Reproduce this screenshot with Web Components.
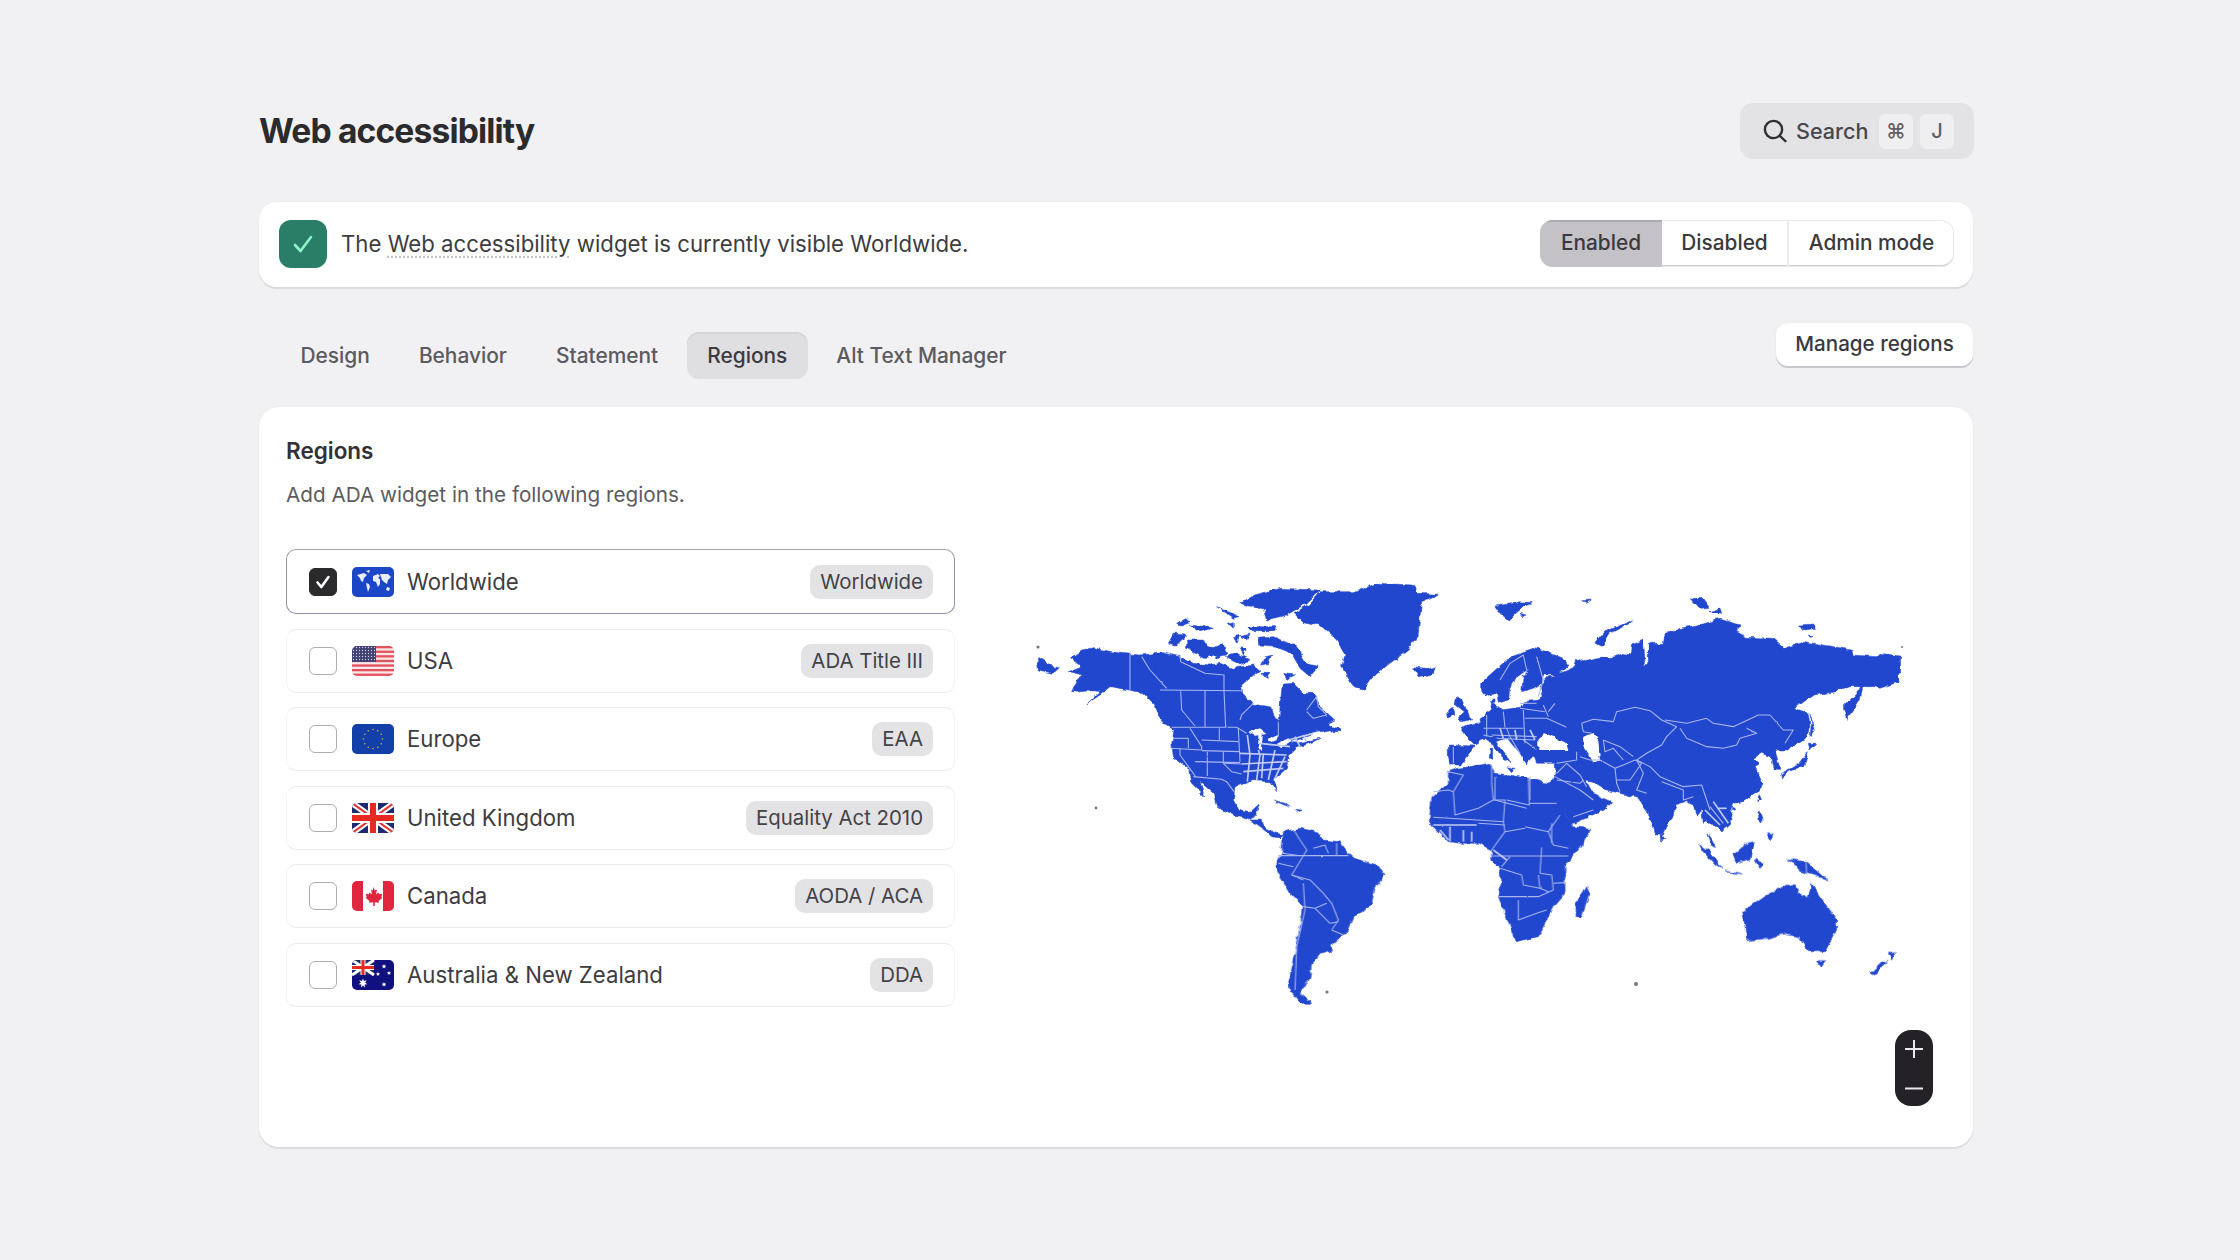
<!DOCTYPE html>
<html lang="en">
<head>
<meta charset="utf-8">
<title>Web accessibility</title>
<style>
  html, body { margin: 0; background: #f1f0f3; }
  body { font-family: Inter, "Liberation Sans", sans-serif; color: #303030; }
</style>
</head>
<body>
<ada-page>
  <page-header slot="header" heading="Web accessibility"></page-header>
  <status-banner slot="banner">The <u>Web accessibility</u> widget is currently visible Worldwide.</status-banner>
  <tab-bar slot="tabs"></tab-bar>
  <regions-card slot="card">
    <region-row slot="list" flag="world" checked>Worldwide<span slot="badge">Worldwide</span></region-row>
    <region-row slot="list" flag="usa">USA<span slot="badge">ADA Title III</span></region-row>
    <region-row slot="list" flag="eu">Europe<span slot="badge">EAA</span></region-row>
    <region-row slot="list" flag="uk">United Kingdom<span slot="badge">Equality Act 2010</span></region-row>
    <region-row slot="list" flag="ca">Canada<span slot="badge">AODA / ACA</span></region-row>
    <region-row slot="list" flag="au">Australia &amp; New Zealand<span slot="badge">DDA</span></region-row>
    <world-map slot="map"></world-map>
    <zoom-control slot="zoom"></zoom-control>
  </regions-card>
</ada-page>

<script>
class AdaPage extends HTMLElement {
  constructor() {
    super();
    this.attachShadow({ mode: "open" });
  }

  connectedCallback() {
    this.shadowRoot.innerHTML = /* html */`
      <style>
        :host {
          display: flex;
          flex-direction: column;
          width: 1714px;
          height: 1260px;
          box-sizing: border-box;
          margin-left: 259px;
          padding-top: 103px;
        }
        .banner { display: block; margin-top: 43px; }
        .tabs { display: block; margin-top: 36px; }
        .card { display: block; margin-top: 28px; }
      </style>
      <slot name="header"></slot>
      <div class="banner"><slot name="banner"></slot></div>
      <div class="tabs"><slot name="tabs"></slot></div>
      <div class="card"><slot name="card"></slot></div>
    `;
  }
}

class PageHeader extends HTMLElement {
  constructor() {
    super();
    this.attachShadow({ mode: "open" });
  }

  connectedCallback() {
    this.shadowRoot.innerHTML = /* html */`
      <style>
        :host { display: flex; align-items: center; justify-content: space-between; height: 56px; }
        h1 { margin: 0; font: 700 33.6px/56px Inter, sans-serif; letter-spacing: -0.85px; color: #2b2a2d; }
        .search {
          display: flex; align-items: center; box-sizing: border-box;
          width: 234px; height: 56px; margin-right: -1px; padding-left: 23px;
          background: #e3e2e5; border-radius: 13px; color: #48474b;
          font: 500 21.6px/30px Inter, sans-serif;
        }
        svg { width: 24px; height: 24px; margin-right: 9px; flex: none; }
        .label { width: 83px; }
        kbd {
          display: flex; align-items: center; justify-content: center;
          width: 34px; height: 35px; margin-right: 7px; border-radius: 6px;
          background: #efeef1; color: #605f63; font: 500 20px/35px Inter, "DejaVu Sans", sans-serif;
        }
      </style>
      <h1>${this.getAttribute("heading")}</h1>
      <div class="search">
        <svg viewBox="0 0 24 24" fill="none" stroke="#303033" stroke-width="2.4" stroke-linecap="round"><circle cx="10.5" cy="10.5" r="8.6"/><path d="M17 17l5.4 5.2"/></svg>
        <span class="label">Search</span>
        <kbd>⌘</kbd><kbd>J</kbd>
      </div>
    `;
  }
}

class StatusBanner extends HTMLElement {
  constructor() {
    super();
    this.attachShadow({ mode: "open" });
  }

  connectedCallback() {
    this.shadowRoot.innerHTML = /* html */`
      <style>
        :host {
          display: flex; align-items: center; height: 85px; box-sizing: border-box;
          padding: 0 19px 2px 20px; background: #fff; border-radius: 18px;
          box-shadow: 0 2px 1px #dcdbde, 0 0 2px #e6e5e8;
        }
        .icon {
          display: flex; align-items: center; justify-content: center; flex: none;
          width: 48px; height: 48px; border-radius: 12px; background: #2a7d67;
        }
        .text { margin-left: 14px; flex: 1; font: 400 22.2px/30px Inter, sans-serif; color: #3d3c40; }
        ::slotted(u) { text-decoration: underline dotted #c3c2c6; text-underline-offset: 5px; }
        .group {
          display: flex; height: 47px; box-sizing: border-box; border-radius: 13px; overflow: hidden;
          box-shadow: inset 0 0 0 1px #e9e8eb, inset 0 -2px 0 #cfced2;
          font: 500 20.8px/46px Inter, sans-serif; color: #3a393d;
        }
        .group span { display: block; text-align: center; box-sizing: border-box; }
        .on { width: 122px; background: #c4c2c6; box-shadow: inset 0 2px 0 #acaab0; }
        .off { width: 127px; border-right: 2px solid #ebeaed; }
        .admin { width: 165px; }
      </style>
      <div class="icon">
        <svg width="26" height="26" viewBox="0 0 26 26" fill="none" stroke="#8df3c8" stroke-width="2.6" stroke-linecap="round" stroke-linejoin="round"><path d="M5 14l5.5 6L21 6"/></svg>
      </div>
      <div class="text"><slot></slot></div>
      <div class="group">
        <span class="on">Enabled</span><span class="off">Disabled</span><span class="admin">Admin mode</span>
      </div>
    `;
  }
}

class TabBar extends HTMLElement {
  constructor() {
    super();
    this.attachShadow({ mode: "open" });
  }

  connectedCallback() {
    const tabs = ["Design", "Behavior", "Statement", "Regions", "Alt Text Manager"];
    this.shadowRoot.innerHTML = /* html */`
      <style>
        :host { display: flex; justify-content: space-between; align-items: flex-start; height: 56px; }
        .tabs { display: flex; gap: 8px; padding: 9px 0 0 21px; }
        .tab {
          height: 47px; padding: 0 20.500px; border-radius: 12px;
          font: 500 20.9px/47px Inter, sans-serif; color: #5b5a5e;
        }
        .tab.active { background: #dfdee1; color: #3c3b3f; box-shadow: inset 0 2px 0 #d6d5d8; }
        button {
          width: 197px; height: 43px; padding: 0 0 2px; border: 0; border-radius: 12px; background: #fff;
          box-shadow: 0 2px 0 #c8c7cb, 0 0 2px #e4e3e6;
          font: 500 20.6px/40px Inter, sans-serif; color: #3a393d;
        }
      </style>
      <div class="tabs">
        ${tabs.map(t => `<div class="tab${t === "Regions" ? " active" : ""}">${t}</div>`).join("")}
      </div>
      <button>Manage regions</button>
    `;
  }
}

class RegionsCard extends HTMLElement {
  constructor() {
    super();
    this.attachShadow({ mode: "open" });
  }

  connectedCallback() {
    this.shadowRoot.innerHTML = /* html */`
      <style>
        :host {
          display: block; position: relative; height: 740px; box-sizing: border-box;
          padding: 29px 0 0 27px; background: #fff; border-radius: 20px;
          box-shadow: 0 2px 1px #dddce0, 0 0 2px #e6e5e8;
        }
        h2 { margin: 0; font: 600 22.5px/30px Inter, sans-serif; color: #323135; }
        p { margin: 14px 0 0; font: 400 20.7px/30px Inter, sans-serif; color: #5c5b5f; }
        .columns { display: flex; margin-top: 39px; }
        .list { display: flex; flex-direction: column; gap: 14.5px; width: 669px; flex: none; }
        .map { display: block; margin: 21px 0 0 65px; }
        .zoom { position: absolute; right: 40px; bottom: 41px; }
      </style>
      <h2>Regions</h2>
      <p>Add ADA widget in the following regions.</p>
      <div class="columns">
        <div class="list"><slot name="list"></slot></div>
        <div class="map"><slot name="map"></slot></div>
      </div>
      <div class="zoom"><slot name="zoom"></slot></div>
    `;
  }
}

const FLAGS = {
  world: `<rect width="42" height="30" fill="#1b46c8"/>
    <path fill="#e8edff" d="M5 8l7-2 3 2-3 3-1 4-2-1-1-3zM14 4l4-1-1 3zM14 16l3 1 1 3-2 5-1-4zM21 9l5-2 2 2-2 2 2 1v5l-2 3-2-5-3-1zM28 7l8 0 3 3-3 3-1 4-3-2-2-2zM35 20l3 1-1 3-3-1z"/>`,
  usa: `<defs><pattern id="dots" width="3" height="3" patternUnits="userSpaceOnUse"><rect width="3" height="3" fill="#3f4070"/><circle cx="1.5" cy="1.5" r=".7" fill="#c9cbe0"/></pattern></defs>
    <rect width="42" height="30" fill="#fbe9ea"/>
    ${[0, 4.6, 9.2, 13.8, 18.4, 23, 27.6].map(y => `<rect y="${y}" width="42" height="2.3" fill="#e2525c"/>`).join("")}
    <rect width="24" height="16" fill="url(#dots)"/>`,
  eu: `<rect width="42" height="30" fill="#1240a8"/>
    ${[...Array(12).keys()].map(i => `<circle cx="${21 + 9.5 * Math.cos(i * Math.PI / 6)}" cy="${15 + 9.5 * Math.sin(i * Math.PI / 6)}" r=".8" fill="#c9b24a"/>`).join("")}`,
  uk: `<rect width="42" height="30" fill="#1c2a6e"/>
    <path d="M0 0L42 30M42 0L0 30" stroke="#fff" stroke-width="6"/>
    <path d="M0 0L42 30M42 0L0 30" stroke="#e2332f" stroke-width="2"/>
    <path d="M21 0V30M0 15H42" stroke="#fff" stroke-width="10"/>
    <path d="M21 0V30M0 15H42" stroke="#e8291f" stroke-width="6"/>`,
  ca: `<rect width="42" height="30" fill="#fff"/><rect width="11" height="30" fill="#e0263f"/><rect x="31" width="11" height="30" fill="#e0263f"/>
    <path fill="#e0263f" d="M21 6l2 3.5 2-1-1 5 2.500-2 .8 1.800 3-.5-1 3.200 1.200.8-4 3.300.5 1.700-4.200-.6V25h-1.600v-3.800l-4.200.6.5-1.700-4-3.300 1.200-.8-1-3.200 3 .5.8-1.800 2.500 2-1-5 2 1z"/>`,
  au: `<rect width="42" height="30" fill="#10107e"/>
    <g><rect width="22" height="15" fill="#1c2a6e"/>
    <path d="M0 0L22 15M22 0L0 15" stroke="#fff" stroke-width="3"/>
    <path d="M11 0V15M0 7.500H22" stroke="#fff" stroke-width="5"/>
    <path d="M11 0V15M0 7.500H22" stroke="#e8291f" stroke-width="3"/></g>
    <path fill="#fff" d="M11 18.500l1 2.600 2.700-.8-1.500 2.400 2.300 1.600-2.800.3.2 2.800-1.900-2-1.900 2 .2-2.800-2.800-.3 2.300-1.600-1.500-2.400 2.700.8zM32 4l.7 1.600 1.600.2-1.200 1.100.4 1.600-1.500-.9-1.500.9.4-1.600-1.200-1.100 1.600-.2zM26 12l.6 1.300 1.400.1-1 1 .3 1.400-1.300-.7-1.300.7.3-1.400-1-1 1.400-.1zM37 11l.6 1.300 1.400.1-1 1 .3 1.400-1.300-.7-1.300.7.3-1.400-1-1 1.400-.1zM32 22l.7 1.600 1.600.2-1.200 1.100.4 1.600-1.500-.9-1.500.9.4-1.600-1.200-1.100 1.600-.2z"/>`
};

class RegionRow extends HTMLElement {
  constructor() {
    super();
    this.attachShadow({ mode: "open" });
  }

  connectedCallback() {
    const checked = this.hasAttribute("checked");
    const clip = "clip-" + this.getAttribute("flag");
    this.shadowRoot.innerHTML = /* html */`
      <style>
        :host {
          display: flex; align-items: center; height: 64px; box-sizing: border-box;
          padding: 0 21px 0 22px; border-radius: 10px; border: 1px solid #f5f5f6;
          border-top-color: #ebebed; border-bottom-color: #ebebed;
          font: 400 22.2px/30px Inter, sans-serif; color: #3d3c40;
        }
        :host([checked]) { border: 1.5px solid #8f91a8; border-top-color: #a9a8ad; height: 65px; }
        .check {
          display: flex; align-items: center; justify-content: center; flex: none;
          width: 28px; height: 28px; box-sizing: border-box; border-radius: 6px;
          border: 1.5px solid #aeadb1; background: #fff;
        }
        :host([checked]) .check { background: #2a292c; border-color: #2a292c; }
        svg.flag { width: 42px; height: 30px; margin: 0 13px 0 15px; flex: none; }
        .label { flex: 1; }
        .badge {
          height: 34px; padding: 0 10px; border-radius: 10px; background: #e3e3e5;
          font: 400 20.4px/34px Inter, sans-serif; color: #434246;
        }
      </style>
      <span class="check">${checked ? `<svg width="20" height="20" viewBox="0 0 20 20" fill="none" stroke="#fff" stroke-width="2.6" stroke-linecap="round" stroke-linejoin="round"><path d="M4.5 10.5l3.8 4.5L15.5 5"/></svg>` : ""}</span>
      <svg class="flag" viewBox="0 0 42 30">
        <defs><clipPath id="${clip}"><rect width="42" height="30" rx="5"/></clipPath></defs>
        <g clip-path="url(#${clip})">${FLAGS[this.getAttribute("flag")]}</g>
      </svg>
      <span class="label"><slot></slot></span>
      <span class="badge"><slot name="badge"></slot></span>
    `;
  }
}

// all coordinates are taken at 3x, each block relative to its origin on the page
const MAP_BLOCKS = [
  {
    origin: [1020, 560],
    land: [
      "150,295 185,270 220,263 250,270 300,280 360,285 430,278 480,290 520,310 570,315 600,310 640,325 700,315 720,330 690,355 665,375 668,400 700,432 750,440 765,470 778,482 780,440 787,372 820,370 850,400 880,400 900,440 945,480 925,490 955,510 925,510 880,520 850,535 810,545 830,550 900,535 880,545 830,565 805,590 800,625 760,660 770,695 750,665 700,662 645,680 640,720 660,755 690,758 718,733 705,760 690,775 640,765 590,740 580,700 540,665 555,710 515,670 510,630 460,590 455,550 462,510 430,490 400,430 370,400 330,390 270,380 240,405 200,432 240,395 200,390 155,395 170,360 190,345 145,335 185,320",
      "900,95 1010,95 1070,70 1180,75 1190,100 1255,103 1205,125 1195,220 1165,270 1110,310 1060,350 1030,388 1000,380 965,320 975,285 950,240 900,195 850,185 825,160 870,130",
      "1178,323 1220,328 1245,320 1240,342 1195,350",
      "700,105 780,85 900,90 860,130 800,165 740,180 730,150 660,130 690,115",
      "715,235 760,230 830,260 860,310 895,320 870,350 840,325 815,280 770,262 720,258",
      "500,240 540,240 590,270 600,295 550,295 500,265",
      "445,250 460,222 500,225 470,255",
      "470,190 500,175 510,185 480,195", "510,195 560,200 580,205 540,215", "640,230 660,225 650,250",
      "660,230 690,222 680,240", "660,260 680,265 670,285", "680,200 770,200 760,212 690,212",
      "590,140 660,170 640,175", "625,190 640,185 640,205", "735,290 755,285 745,310 725,315",
      "720,340 750,340 740,355", "925,505 955,503 962,515 940,515", "52,292 100,320 118,323 100,340 55,330",
      "620,290 650,280 690,300 660,315", "575,265 610,250 620,285 590,290", "790,340 825,345 800,358"
    ],
    sea: ["565,292 590,285 575,315", "480,288 500,282 512,305"],
    lines: ["330,280 330,390", "365,290 390,330 440,385"],
    thick: []
  },
  {
    origin: [1160, 640],
    land: [],
    sea: [
      "265,278 300,265 322,282 285,287", "295,285 305,285 303,330 295,322", "325,297 355,285 350,300 335,307",
      "350,312 385,295 395,302 365,322"
    ],
    lines: [
      "60,50 62,65 135,100 192,105 192,150", "0,150 245,152", "62,152 65,210 105,258", "135,152 135,262", "192,152 197,262",
      "240,240 245,225 280,190", "355,245 355,290", "35,262 230,262 260,280", "90,265 125,320 125,330", "40,295 85,295",
      "32,325 125,330", "125,300 235,305", "178,265 178,300", "235,265 240,365", "125,332 240,335", "142,335 142,408",
      "190,335 190,370 245,372", "190,370 215,395 245,402", "105,365 240,368", "60,325 60,345 100,400 108,412", "85,295 85,325",
      "100,410 185,418 200,425 222,455", "440,210 470,170 475,200 500,225 460,235 440,215"
    ],
    thick: [
      "262,285 270,345 262,425", "295,330 300,345 290,420", "310,340 305,415", "345,330 325,420", "375,350 345,415",
      "240,340 380,345", "245,372 380,365", "250,395 370,385", "300,310 390,320", "385,300 460,280", "405,290 420,320", "430,285 440,305"
    ]
  },
  {
    origin: [1200, 760],
    land: [
      "250,215 300,205 350,215 370,240 420,245 445,280 470,300 540,320 555,345 525,385 515,430 490,455 460,470 445,505 410,545 390,555 395,570 360,580 350,600 335,615 330,650 315,680 300,700 335,730 300,730 270,690 265,660 280,610 295,530 310,440 270,400 235,340 225,315 245,280 248,245",
      "105,150 150,158 178,132 170,160 150,180 180,180 200,205 232,220 250,225 240,234 215,230 195,212 150,180",
      "220,120 255,130 270,142 240,130", "285,145 305,148 295,155",
      "745,35 775,25 870,10 885,40 930,45 985,55 1040,70 1060,60 1100,170 1120,200 1172,205 1150,250 1095,320 1095,400 1060,440 1040,480 1015,530 945,545 930,500 895,410 905,360 895,320 875,300 875,270 835,250 780,250 745,245 700,200 688,180 695,115 745,70",
      "1160,380 1168,400 1145,470 1125,470 1125,430 1150,400"
    ],
    sea: [],
    lines: [
      "235,287 445,287", "285,215 300,240 320,270 310,287 290,320 275,345 310,360", "275,345 330,360 370,400 395,430 415,480 395,510",
      "310,440 345,445 380,430", "310,370 315,450 290,560 285,690", "345,445 390,490 415,485", "395,510 430,525",
      "340,265 375,255 385,280", "410,250 410,285", "248,280 300,287", "235,310 280,320",
      "760,95 765,165 835,145 880,120 875,70 875,20", "700,172 830,180 910,185 915,120 880,120", "985,55 988,135 920,120",
      "988,130 1070,130", "975,200 1045,215 1080,165", "835,190 915,195", "910,185 915,215 975,205", "875,288 1105,288",
      "1025,262 1020,340", "900,325 965,345 970,375 1020,385", "895,410 1015,410 1060,390", "955,420 955,480 1010,460 1040,450",
      "1060,370 1095,368", "700,95 745,90 760,95", "745,35 790,45 760,95", "1045,215 1060,255 1105,265", "1055,190 1055,250",
      "915,215 875,270", "930,290 905,320", "1020,340 1055,345 1060,390", "1015,345 1020,385 1045,395"
    ],
    thick: ["700,195 830,195", "750,200 750,245", "790,210 790,245", "815,215 815,245", "720,210 745,240", "880,270 920,300"]
  },
  {
    origin: [1480, 560],
    land: [
      "180,380 205,350 230,345 285,320 290,295 310,305 360,295 405,290 430,280 450,285 455,255 490,240 495,300 490,320 505,305 505,250 550,250 555,225 600,205 680,190 720,175 780,195 770,215 800,232 880,235 915,265 975,245 1060,260 1115,270 1120,285 1190,290 1200,280 1262,288 1262,340 1250,345 1258,365 1200,385 1180,380 1110,380 1070,395 1000,405 945,445 985,460 990,500 975,540 945,555 920,570 885,570 870,590 845,580 820,595 840,610 825,620 850,670 835,695 790,725 760,730 750,750 760,770 745,800 725,815 700,790 680,790 680,780 670,790 665,750 650,770 640,735 615,725 590,735 550,825 525,825 505,760 475,715 420,700 380,690 340,665 320,660 345,705 395,725 370,750 285,790 270,790 215,680 228,640 225,610 170,610 160,585 170,560 220,500",
      "5,370 60,320 100,285 165,263 185,270 250,295 265,315 235,345 200,345 190,345 185,370 160,385 125,395 130,345 150,325 110,350 90,385 85,420 55,430 50,395 20,410 5,390",
      "45,138 100,130 120,125 160,128 130,140 110,155 85,180 60,160", "120,160 138,165 128,170", "305,122 335,120 320,128",
      "345,250 375,215 460,180 450,190 390,220 365,260", "632,118 665,112 690,145 660,148", "690,155 720,145 725,160",
      "955,198 1000,195 1010,205 975,210", "985,225 1000,228 990,232",
      "1145,365 1150,375 1140,420 1100,478 1090,440 1130,400",
      "990,460 1003,510 990,530 995,490", "985,550 1010,550 990,570", "985,575 975,615 915,640 908,655 905,640 960,610",
      "870,590 885,570 900,625 880,625", "838,705 842,720 833,725", "543,820 555,838 545,843", "755,740 765,745 755,750"
    ],
    sea: [],
    lines: [
      "305,490 340,478 400,485 410,455 465,442 510,452 545,480 590,500",
      "555,480 620,490 680,475 700,490 760,500 835,465 870,465 910,510 940,510 915,550",
      "600,505 620,535 680,560 730,565 770,555 780,535 830,520 800,505", "590,500 560,530 545,555 500,580 470,600 510,620 540,650 610,680 665,675 680,720",
      "470,600 490,640 470,690 500,700", "545,665 610,690 610,720 640,710", "405,625 410,670 420,695",
      "410,660 450,660 485,610 465,600 430,615 405,625", "370,540 420,560 460,590", "370,540 375,575 400,565 430,600", "305,490 310,515 335,520",
      "300,590 330,600 360,600 405,625", "225,650 300,690 340,720", "230,660 300,670 310,660", "280,770 340,750",
      "150,650 150,720", "45,650 45,720 140,745", "680,720 690,750", "690,740 730,790"
    ],
    thick: ["700,725 745,790", "715,745 740,745", "675,750 720,795"]
  },
  {
    origin: [1420, 640],
    land: [
      "385,150 360,180 310,185 300,205 250,212 235,200 215,190 210,212 185,230 175,248 120,265 135,285 165,315 195,295 215,310 240,345 270,368 258,345 228,305 262,292 300,340 320,372 345,345 345,325 360,325 355,300 375,280 440,300 480,260 400,210",
      "85,315 165,318 140,350 125,375 90,375 85,350",
      "110,170 125,175 130,195 155,240 120,245 115,230 130,215 105,195",
      "82,212 100,205 105,225 85,235", "210,325 218,325 218,355 208,355", "262,380 285,385 275,395", "215,180 225,180 225,190 213,190"
    ],
    sea: [
      "355,300 375,280 410,295 440,310 445,330 400,330 355,330",
      "490,290 520,280 535,300 540,365 520,370 505,345 490,320"
    ],
    lines: [
      "200,225 200,290", "190,265 310,265", "250,215 255,262", "310,210 315,310", "215,285 350,290", "230,295 345,300",
      "315,235 380,235 440,262", "370,195 385,230", "300,205 375,215", "260,265 270,290 300,340", "310,300 345,325",
      "240,120 270,70 310,45 320,90", "350,50 370,120 355,170", "100,320 100,370", "410,370 470,360 470,335",
      "410,400 440,370 480,405 500,440", "300,190 350,190", "405,190 385,215", "190,285 215,290"
    ],
    thick: ["330,270 345,300", "240,265 250,295", "285,270 290,300"]
  },
  {
    origin: [1640, 780],
    land: [
      "358,45 365,60 355,62", "360,95 370,120 358,125 355,105", "380,160 400,165 390,180",
      "178,190 210,215 245,265 225,255 190,215", "252,272 310,285 280,282", "200,160 215,180 230,205 215,200",
      "280,225 320,190 340,185 330,240 290,250", "350,235 370,250 360,265 345,240",
      "440,235 460,240 500,245 565,300 520,285 480,275 465,250",
      "308,395 370,350 410,330 440,315 470,318 475,340 505,355 515,310 540,350 590,420 590,450 555,515 505,515 475,470 430,462 365,480 320,485 315,440",
      "532,542 558,542 545,560", "745,520 770,518 755,540", "725,545 742,545 705,585 690,580"
    ],
    sea: [],
    lines: ["498,243 500,280"],
    thick: []
  }
];

// tiny far-off islands, in page coordinates
const MAP_SPECKS = [[1096, 808, 1.4], [1038, 647, 1.6], [1636, 984, 2], [1327, 992, 1.6], [1902, 647, 1]];

class WorldMap extends HTMLElement {
  constructor() {
    super();
    this.attachShadow({ mode: "open" });
  }

  connectedCallback() {
    const pass = fn => MAP_BLOCKS.map(b => `<g transform="translate(${b.origin[0]} ${b.origin[1]}) scale(.3333)">${fn(b)}</g>`).join("");
    const land = pass(b => b.land.map(p => `<polygon class="land" points="${p}"/>`).join(""));
    const sea = pass(b => b.sea.map(p => `<polygon class="sea" points="${p}"/>`).join(""));
    const lines = pass(b => b.lines.map(p => `<polyline class="line" points="${p}"/>`).join("")
      + b.thick.map(p => `<polyline class="line thick" points="${p}"/>`).join(""));
    const specks = MAP_SPECKS.map(([x, y, r]) => `<circle cx="${x}" cy="${y}" r="${r}" fill="#77767c"/>`).join("");
    this.shadowRoot.innerHTML = /* html */`
      <style>
        :host { display: block; width: 900px; height: 445px; }
        svg { display: block; width: 900px; height: 445px; overflow: visible; }
        .land { fill: #2347cf; stroke: #2347cf; stroke-width: 1.5; stroke-linejoin: round; }
        .sea { fill: #fff; }
        .line { fill: none; stroke: #a9b7f0; stroke-width: 3.2; stroke-linejoin: round; }
        .thick { stroke: #c2ccf5; stroke-width: 5; }
      </style>
      <svg viewBox="1020 570 900 445">
        <defs>
          <filter id="coast" filterUnits="userSpaceOnUse" x="1010" y="560" width="920" height="465">
            <feTurbulence type="fractalNoise" baseFrequency="0.14" numOctaves="2" seed="4"/>
            <feDisplacementMap in="SourceGraphic" scale="5" xChannelSelector="R" yChannelSelector="G"/>
            <feGaussianBlur stdDeviation="0.35"/>
          </filter>
          <filter id="border" filterUnits="userSpaceOnUse" x="1010" y="560" width="920" height="465">
            <feTurbulence type="fractalNoise" baseFrequency="0.2" numOctaves="1" seed="9"/>
            <feDisplacementMap in="SourceGraphic" scale="1.800" xChannelSelector="R" yChannelSelector="G"/>
          </filter>
        </defs>
        <g filter="url(#coast)">${land}${sea}</g>
        <g filter="url(#border)">${lines}</g>
        ${specks}
      </svg>
    `;
  }
}

class ZoomControl extends HTMLElement {
  constructor() {
    super();
    this.attachShadow({ mode: "open" });
  }

  connectedCallback() {
    this.shadowRoot.innerHTML = /* html */`
      <style>
        :host { display: block; width: 38px; height: 76px; border-radius: 16px; background: #242226; }
        svg { display: block; }
      </style>
      <svg width="38" height="76" viewBox="0 0 38 76" fill="none" stroke="#e9e8ea" stroke-width="2"><path d="M19 10v18M10 19h18M10 58.500h18"/></svg>
    `;
  }
}

customElements.define("ada-page", AdaPage);
customElements.define("page-header", PageHeader);
customElements.define("status-banner", StatusBanner);
customElements.define("tab-bar", TabBar);
customElements.define("regions-card", RegionsCard);
customElements.define("region-row", RegionRow);
customElements.define("world-map", WorldMap);
customElements.define("zoom-control", ZoomControl);
</script>
</body>
</html>
